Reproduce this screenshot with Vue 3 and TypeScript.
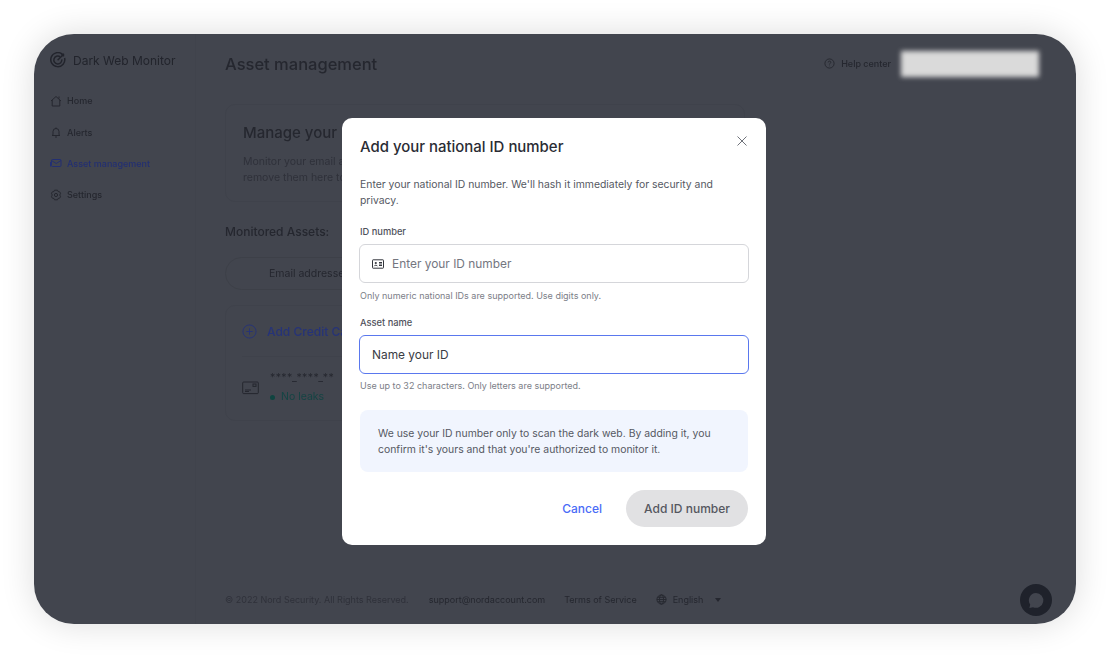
<script setup lang="ts">
const nav = [
  { label: 'Home', icon: 'home' },
  { label: 'Alerts', icon: 'bell' },
  { label: 'Asset management', icon: 'asset', active: true },
  { label: 'Settings', icon: 'gear' },
]
</script>

<template>
  <div class="page">
    <div class="frame">
      <aside class="sidebar">
        <div class="brand">
          <svg width="16" height="16" viewBox="0 0 16 16" fill="none" stroke="currentColor" stroke-width="1.5">
            <path d="M12.2 2.2A7 7 0 1 0 14.6 6" />
            <path d="M10 4.6A4 4 0 1 0 11.8 7.4" />
            <path d="M7.6 8.2 14 1.8M12 1.6l.2 2 2 .2" />
          </svg>
          <span>Dark Web Monitor</span>
        </div>
        <nav class="nav">
          <a v-for="n in nav" :key="n.label" class="nav-item" :class="{ active: n.active }">
            <svg width="12" height="12" viewBox="0 0 12 12" fill="none" stroke="currentColor" stroke-width="1">
              <template v-if="n.icon === 'home'">
                <path d="M1 6 6 1.500 11 6M2.200 5v6h7.600V5M9 1.500v2" />
              </template>
              <template v-else-if="n.icon === 'bell'">
                <path d="M3 8.800V5.500a3 3 0 0 1 6 0v3.300l1 .7H2zM5 11h2M6 1.500v1" />
              </template>
              <template v-else-if="n.icon === 'asset'">
                <rect x="1.500" y="2.500" width="9.500" height="7" rx="1" />
                <path d="m1.500 3.500 4.700 3 4.800-3" />
                <path d="M.5 5v4.500" />
              </template>
              <template v-else>
                <path d="m4.500 1.200h3l.6 1.400 1.500.2.900 1.400-.7 1.800.7 1.800-.9 1.400-1.500.2-.6 1.400h-3l-.6-1.400-1.500-.2-.9-1.400.7-1.800-.7-1.800.9-1.400 1.500-.2z" />
                <circle cx="6" cy="6" r="1.600" />
              </template>
            </svg>
            <span>{{ n.label }}</span>
          </a>
        </nav>
      </aside>

      <main class="main">
        <header class="topbar">
          <h1>Asset management</h1>
          <div class="help">
            <svg width="11" height="11" viewBox="0 0 12 12" fill="none" stroke="currentColor" stroke-width="1">
              <circle cx="6" cy="6" r="5" />
              <path d="M4.600 4.800a1.400 1.400 0 1 1 2.100 1.200c-.5.3-.7.5-.7 1M6 8.400v.6" />
            </svg>
            <span>Help center</span>
          </div>
        </header>

        <section class="manage">
          <h2>Manage your</h2>
          <p>Monitor your email and<br />remove them here to</p>
        </section>

        <div class="monitored">Monitored Assets:</div>

        <div class="tabs"><span>Email addresses</span></div>

        <section class="list">
          <div class="row add">
            <svg width="15" height="15" viewBox="0 0 16 16" fill="none" stroke="currentColor" stroke-width="1">
              <circle cx="8" cy="8" r="7" />
              <path d="M8 4.600v6.800M4.600 8h6.800" />
            </svg>
            <span>Add Credit Card</span>
          </div>
          <div class="row card">
            <svg class="card-icon" width="17" height="14" viewBox="0 0 17 14" fill="none" stroke="currentColor" stroke-width="1">
              <rect x=".7" y="1" width="15.600" height="11.600" rx="1" />
              <path d="M3 9h6M3 10.500h4" />
              <rect x="11" y="3" width="3" height="2.400" />
            </svg>
            <div class="card-text">
              <div class="mask">****_****_**</div>
              <div class="status"><i></i>No leaks</div>
            </div>
          </div>
        </section>

        <footer class="footer">
          <span class="copy">© 2022 Nord Security. All Rights Reserved.</span>
          <span>support@nordaccount.com</span>
          <span>Terms of Service</span>
          <span class="lang">
            <svg width="11" height="11" viewBox="0 0 12 12" fill="none" stroke="currentColor" stroke-width="1">
              <circle cx="6" cy="6" r="5" />
              <ellipse cx="6" cy="6" rx="2.200" ry="5" />
              <path d="M1 6h10M1.600 3.600h8.800M1.600 8.400h8.800" />
            </svg>
            English
            <b class="caret"></b>
          </span>
        </footer>
      </main>

      <div class="chat">
        <svg width="32" height="32" viewBox="0 0 32 32">
          <path d="M16 9a7.400 7.400 0 1 1-3 14.200L9.400 24l.8-3.400A7.400 7.400 0 0 1 16 9z" fill="#42454e" />
        </svg>
      </div>

      <div class="account"></div>

      <div class="overlay">
        <div class="modal" role="dialog">
          <button class="close" aria-label="Close">
            <svg width="10" height="10" viewBox="0 0 10 10" fill="none" stroke="currentColor" stroke-width="1">
              <path d="m.5.5 9 9M9.500.5l-9 9" />
            </svg>
          </button>
          <h3>Add your national ID number</h3>
          <p class="desc">Enter your national ID number. We'll hash it immediately for security and privacy.</p>

          <label class="label first">ID number</label>
          <div class="input">
            <svg width="12" height="10" viewBox="0 0 12 10" fill="none" stroke="#33353c" stroke-width="1">
              <rect x=".5" y=".8" width="11" height="8.400" rx=".6" />
              <circle cx="3.800" cy="4" r="1.100" fill="#33353c" stroke="none" />
              <path d="M2.200 7.200c.3-1.300 2.900-1.300 3.200 0M7 3.500h3M7 5h3M7 6.500h3" />
            </svg>
            <span class="placeholder">Enter your ID number</span>
          </div>
          <div class="hint">Only numeric national IDs are supported. Use digits only.</div>

          <label class="label second">Asset name</label>
          <div class="input focused"><span class="value">Name your ID</span></div>
          <div class="hint tight">Use up to 32 characters. Only letters are supported.</div>

          <div class="notice">We use your ID number only to scan the dark web. By adding it, you confirm it's yours and that you're authorized to monitor it.</div>

          <div class="actions">
            <button class="cancel">Cancel</button>
            <button class="submit">Add ID number</button>
          </div>
        </div>
      </div>
    </div>
  </div>
</template>

<style>
html, body { margin: 0; background: #fff; }
</style>

<style scoped>
* { box-sizing: border-box; }
.page {
  width: 1110px;
  height: 658px;
  padding: 34px;
  font-family: Inter, "Liberation Sans", sans-serif;
  background: #fff;
  overflow: hidden;
}
.frame {
  position: relative;
  width: 1042px;
  height: 590px;
  border-radius: 40px;
  display: flex;
  background: #42454e;
  color: #25272f;
  box-shadow: 0 0 34px rgba(0, 0, 0, 0.14);
  filter: blur(0.25px);
}
.sidebar {
  width: 162px;
  flex: none;
  padding: 18px 8px 0 16px;
  border-right: 1px solid #40434c;
}
.brand {
  display: flex;
  align-items: center;
  gap: 7px;
  font-size: 12px;
  height: 16px;
  color: #22242c;
}
.nav { margin-top: 17px; display: flex; flex-direction: column; }
.nav-item {
  display: flex;
  align-items: center;
  gap: 5px;
  height: 31.400px;
  font-size: 9px;
  font-weight: 500;
  color: #25272f;
}
.nav-item svg { flex: none; }
.nav-item.active { color: #232f72; }
.main {
  flex: 1;
  padding: 0 0 0 29px;
  display: flex;
  flex-direction: column;
  position: relative;
}
.topbar {
  height: 60px;
  display: flex;
  align-items: center;
  justify-content: space-between;
}
.topbar h1 {
  margin: 0;
  font-size: 16.500px;
  font-weight: 500;
  color: #25272f;
}
.help {
  display: flex;
  align-items: center;
  gap: 6px;
  font-size: 9px;
  font-weight: 500;
  margin: 0 185px 2px 0;
  color: #25272f;
}
.manage {
  margin-top: 10px;
  width: 520px;
  height: 98px;
  border: 1px solid #3f424b;
  border-radius: 10px;
  padding: 17px 17px;
}
.manage h2 {
  margin: 0;
  font-size: 15px;
  font-weight: 500;
  line-height: 22px;
  color: #25272f;
}
.manage p {
  margin: 10px 0 0;
  font-size: 10.500px;
  line-height: 15.500px;
  color: #2f313a;
  white-space: nowrap;
}
.monitored {
  margin-top: 21px;
  font-size: 12px;
  font-weight: 500;
  line-height: 18px;
}
.tabs {
  margin-top: 16px;
  width: 420px;
  height: 33px;
  border: 1px solid #3d4048;
  border-radius: 17px;
  padding-left: 43px;
  display: flex;
  align-items: center;
  font-size: 10.500px;
  color: #25272f;
}
.list {
  margin-top: 15px;
  width: 520px;
  height: 116px;
  border: 1px solid #3f424b;
  border-radius: 10px;
  padding: 0 16px;
}
.row { display: flex; align-items: center; }
.add {
  height: 51px;
  gap: 10px;
  color: #263378;
  font-size: 12px;
  font-weight: 500;
  border-bottom: 1px solid #3f424b;
}
.card { height: 62px; gap: 11px; }
.card-icon { margin-top: -1px; }
.mask { font-size: 10.500px; letter-spacing: 0.4px; color: #25272f; line-height: 16px; }
.status {
  font-size: 10.500px;
  color: #154444;
  line-height: 18px;
  margin-top: 2px;
  display: flex;
  align-items: center;
  gap: 6px;
}
.status i { width: 5px; height: 5px; border-radius: 50%; background: #0f4440; }
.footer {
  position: absolute;
  left: 29px;
  top: 560px;
  display: flex;
  align-items: center;
  gap: 19px;
  font-size: 9px;
  color: #25272f;
  white-space: nowrap;
}
.copy { color: #2f313a; margin-right: 1px; }
.lang { display: flex; align-items: center; gap: 6px; }
.caret {
  margin-left: 6px;
  width: 0;
  height: 0;
  border: 3px solid transparent;
  border-top: 4px solid currentColor;
  border-bottom: 0;
}
.chat {
  position: absolute;
  left: 986px;
  top: 550px;
  width: 32px;
  height: 32px;
  border-radius: 50%;
  background: #1f222b;
}
.chat svg { display: block; }
.account {
  position: absolute;
  left: 867px;
  top: 17px;
  width: 138px;
  height: 26px;
  background: #dadada;
  filter: blur(2.500px);
}
.overlay {
  position: absolute;
  inset: 0;
  display: flex;
  align-items: flex-start;
  justify-content: center;
  padding: 84px 2px 0 0;
}
.modal {
  position: relative;
  width: 424px;
  height: 427px;
  background: #fff;
  border-radius: 10px;
  padding: 19px 18px 0;
}
.close {
  position: absolute;
  top: 18px;
  right: 19px;
  padding: 0;
  border: 0;
  background: none;
  color: #6f727a;
  line-height: 0;
}
.modal h3 {
  margin: 0;
  font-size: 14.950px;
  font-weight: 450;
  line-height: 20px;
  color: #2a2c34;
}
.desc {
  margin: 20px 0 0;
  font-size: 10.400px;
  line-height: 15.500px;
  color: #555862;
}
.label {
  display: block;
  font-size: 9.300px;
  font-weight: 450;
  line-height: 13px;
  color: #4f515b;
}
.label.first { margin-top: 17px; }
.label.second { margin-top: 14px; }
.input {
  margin-top: 6px;
  margin-left: -1px;
  width: 390px;
  height: 39px;
  border: 1px solid #d5d6da;
  border-radius: 6px;
  display: flex;
  align-items: center;
  gap: 8px;
  padding: 0 12px;
  font-size: 11.900px;
}
.input.focused { border-color: #5a78ee; }
.placeholder { color: #74767f; }
.value { color: #3a3c44; }
.hint {
  margin-top: 6px;
  font-size: 9px;
  line-height: 13px;
  color: #7c7e87;
}
.hint.tight { margin-top: 5px; }
.notice {
  margin-top: 18px;
  width: 388px;
  height: 62px;
  background: #f1f5fe;
  border-radius: 8px;
  padding: 16px 18px;
  font-size: 10.400px;
  line-height: 15.500px;
  color: #555862;
}
.actions {
  margin-top: 18px;
  width: 388px;
  display: flex;
  justify-content: flex-end;
  align-items: center;
  gap: 24px;
}
.actions button {
  font-family: inherit;
  font-size: 12px;
  font-weight: 450;
  border: 0;
  padding: 0;
}
.cancel { background: none; color: #4a6cf7; }
.submit {
  width: 122px;
  height: 37px;
  border-radius: 19px;
  background: #e1e1e3;
  color: #55575f;
}
</style>
